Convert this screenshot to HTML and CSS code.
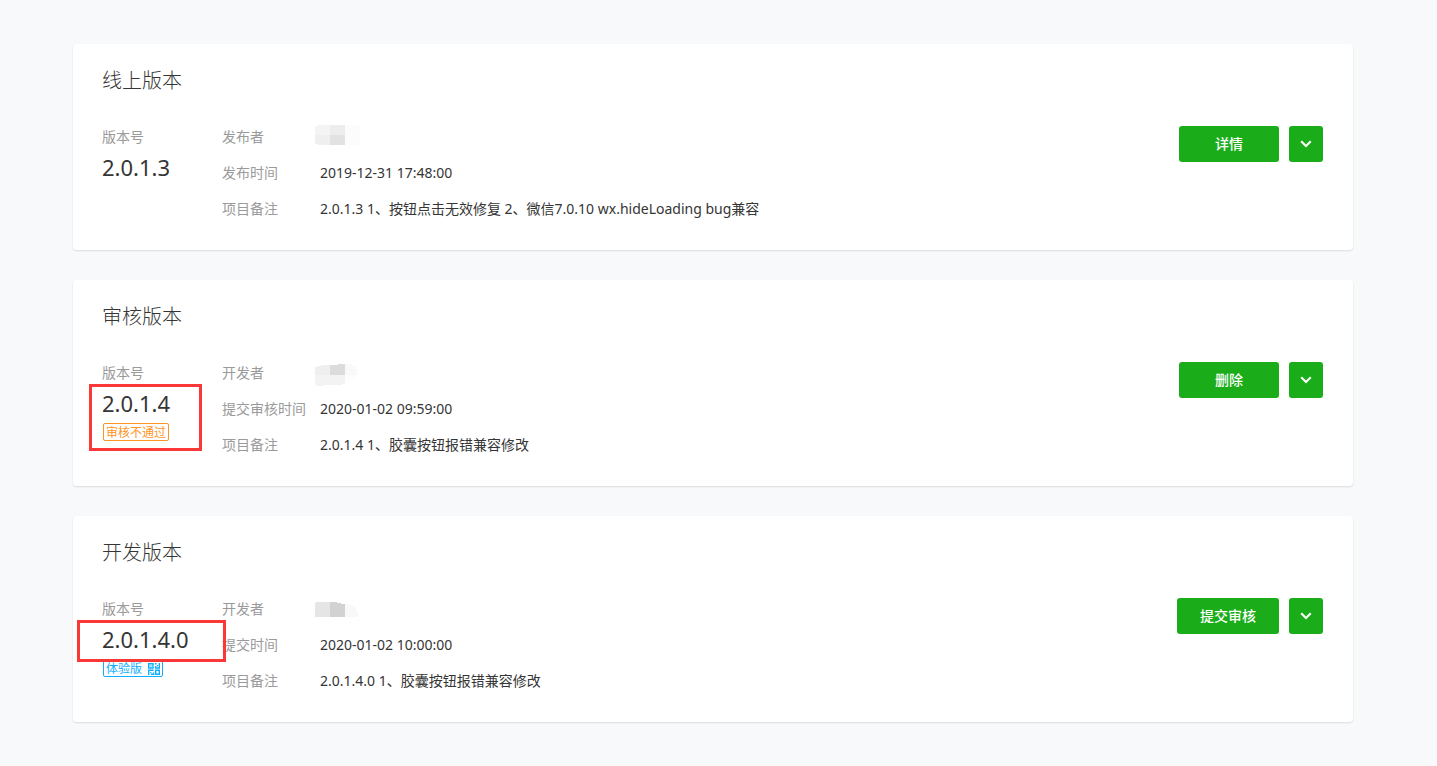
FILE: index.html
```html
<!DOCTYPE html>
<html lang="zh-CN">

<head>
    <meta charset="UTF-8">
    <title>版本管理</title>
    <link rel="stylesheet" href="styles.css">
</head>

<body>

    <main class="versions">
        <section class="card">
            <h2>线上版本</h2>
            <div class="card-body">
                <div class="version">
                    <div class="label">版本号</div>
                    <div class="number">2.0.1.3</div>
                </div>
                <dl class="info">
                    <dt>发布者</dt>
                    <dd class="top">
                        <svg class="mosaic" width="45" height="20" viewBox="0 0 45 20" shape-rendering="crispEdges" aria-hidden="true">
                            <path fill="#f4f4f4" d="M0 1H3V0H15V10H0z"/>
                            <path fill="#ededed" d="M15 0H30V10H15z"/>
                            <path fill="#fcfcfc" d="M30 0H45V20H30z"/>
                            <path fill="#efefef" d="M0 10H15V20H3V19H0z"/>
                            <path fill="#e2e2e2" d="M15 10H30V20H15z"/>
                        </svg>
                    </dd>
                    <dt>发布时间</dt>
                    <dd>2019-12-31 17:48:00</dd>
                    <dt>项目备注</dt>
                    <dd>2.0.1.3 1、按钮点击无效修复 2、微信7.0.10 wx.hideLoading bug兼容</dd>
                </dl>
                <div class="actions">
                    <button class="btn" type="button">详情</button>
                    <button class="btn btn-more" type="button" aria-label="更多">
                        <svg width="12" height="8" viewBox="0 0 12 8"><path d="M1.2 1.2L6 6L10.8 1.2" fill="none" stroke="#fff" stroke-width="2"/></svg>
                    </button>
                </div>
            </div>
        </section>

        <section class="card">
            <h2>审核版本</h2>
            <div class="card-body">
                <div class="version">
                    <div class="label">版本号</div>
                    <div class="number">2.0.1.4</div>
                    <span class="tag tag-fail">审核不通过</span>
                    <div class="mark mark-audit"></div>
                </div>
                <dl class="info">
                    <dt>开发者</dt>
                    <dd class="low">
                        <svg class="mosaic" width="45" height="22" viewBox="0 0 45 22" shape-rendering="crispEdges" aria-hidden="true">
                            <path fill="#efefef" d="M0 3H2V2H6V1H15V11H0z"/>
                            <path fill="#dcdcdc" d="M15 1H23V0H30V11H15z"/>
                            <path fill="#f9f9f9" d="M30 0H37V2H40V5H42V11H30z"/>
                            <path fill="#f3f3f3" d="M0 11H30V20H27V21H9V22H2V21H0z"/>
                            <path fill="#fdfdfd" d="M30 11H42V13H39V16H36V19H30z"/>
                        </svg>
                    </dd>
                    <dt>提交审核时间</dt>
                    <dd>2020-01-02 09:59:00</dd>
                    <dt>项目备注</dt>
                    <dd>2.0.1.4 1、胶囊按钮报错兼容修改</dd>
                </dl>
                <div class="actions">
                    <button class="btn" type="button">删除</button>
                    <button class="btn btn-more" type="button" aria-label="更多">
                        <svg width="12" height="8" viewBox="0 0 12 8"><path d="M1.2 1.2L6 6L10.8 1.2" fill="none" stroke="#fff" stroke-width="2"/></svg>
                    </button>
                </div>
            </div>
        </section>

        <section class="card">
            <h2>开发版本</h2>
            <div class="card-body">
                <div class="version">
                    <div class="label">版本号</div>
                    <div class="number">2.0.1.4.0</div>
                    <span class="tag tag-trial">体验版
                        <svg width="12" height="12" viewBox="0 0 12 12" aria-hidden="true">
                            <path fill="none" stroke="#10aeff" stroke-width="1.4" d="M.7 .7H5V5H.7zM7 .7H8.6M11.3 0V5H7M7.7 5V3M.7 12V7.3H5.6M3 11.3H5.6V9.4M7.7 7.3H11.3V11.3H7.7z"/>
                            <path fill="#10aeff" d="M2.3 2.3H3.5V3.5H2.3zM8.8 2H10V3.2H8.8zM2.2 9H3.4V10.2H2.2z"/>
                        </svg>
                    </span>
                    <div class="mark mark-dev"></div>
                </div>
                <dl class="info">
                    <dt>开发者</dt>
                    <dd>
                        <svg class="mosaic" width="45" height="15" viewBox="0 0 45 15" shape-rendering="crispEdges" aria-hidden="true">
                            <path fill="#e5e5e5" d="M0 1H1V0H15V15H0z"/>
                            <path fill="#d2d2d2" d="M15 0H22V1H26V2H30V15H15z"/>
                            <path fill="#f8f8f8" d="M30 2H35V3H38V5H41V8H42V11H43V15H30z"/>
                        </svg>
                    </dd>
                    <dt>提交时间</dt>
                    <dd>2020-01-02 10:00:00</dd>
                    <dt>项目备注</dt>
                    <dd>2.0.1.4.0 1、胶囊按钮报错兼容修改</dd>
                </dl>
                <div class="actions">
                    <button class="btn" type="button">提交审核</button>
                    <button class="btn btn-more" type="button" aria-label="更多">
                        <svg width="12" height="8" viewBox="0 0 12 8"><path d="M1.2 1.2L6 6L10.8 1.2" fill="none" stroke="#fff" stroke-width="2"/></svg>
                    </button>
                </div>
            </div>
        </section>
    </main>

</body>

</html>
```
FILE: styles.css
```css
* {
    box-sizing: border-box;
}

body {
    margin: 0;
    background: #f8f9fb;
    color: #353535;
    font-family: "Noto Sans", "Noto Sans CJK SC", sans-serif;
    font-size: 14px;
}

.versions {
    display: flex;
    flex-direction: column;
    gap: 30px;
    padding: 44px 84px 44px 73px;
}

.card {
    padding: 22px 30px 23px 29px;
    background: #fff;
    border-radius: 4px;
    box-shadow: 0 1px 2px rgba(0, 0, 0, 0.12);
}

.card h2 {
    margin: 0 0 23px;
    font-size: 20px;
    font-weight: 300;
    line-height: 30px;
}

.card-body {
    display: flex;
    align-items: flex-start;
}

.version {
    position: relative;
    width: 120px;
}

.label {
    color: #9a9a9a;
    line-height: 36px;
}

.number {
    font-size: 22px;
    line-height: 24px;
}

.tag {
    display: inline-flex;
    align-items: center;
    gap: 6px;
    height: 18px;
    margin: 8px 0 0 1px;
    padding: 1px 2px 0;
    border: 1px solid;
    border-radius: 2px;
    font-size: 12px;
    line-height: 16px;
}

.tag-fail {
    color: #ff9326;
}

.tag-trial {
    color: #10aeff;
}

/* red highlight frames */
.mark {
    position: absolute;
    z-index: 1;
    border: 3px solid #fa3838;
}

.mark-audit {
    top: 29px;
    left: -13px;
    width: 113px;
    height: 67px;
}

.mark-dev {
    top: 29px;
    left: -25px;
    width: 149px;
    height: 42px;
}

.info {
    display: grid;
    grid-template-columns: 98px 1fr;
    flex: 1;
    margin: 0;
    line-height: 36px;
}

.info dt {
    color: #9a9a9a;
}

.info dd {
    display: flex;
    align-items: center;
    height: 36px;
    margin: 0;
}

.info .top {
    align-items: flex-start;
    padding-top: 6px;
}

.info .low {
    padding-top: 4px;
}

.mosaic {
    margin-left: -5px;
}

.actions {
    display: flex;
    gap: 10px;
    margin-top: 7px;
}

.btn {
    min-width: 100px;
    height: 36px;
    padding: 0 23px 2px;
    border: none;
    border-radius: 3px;
    background: #1aad19;
    color: #fff;
    font-family: inherit;
    font-size: 14px;
    font-weight: 500;
    cursor: pointer;
}

.btn-more {
    display: flex;
    align-items: center;
    justify-content: center;
    min-width: 34px;
    padding: 0;
}
```
